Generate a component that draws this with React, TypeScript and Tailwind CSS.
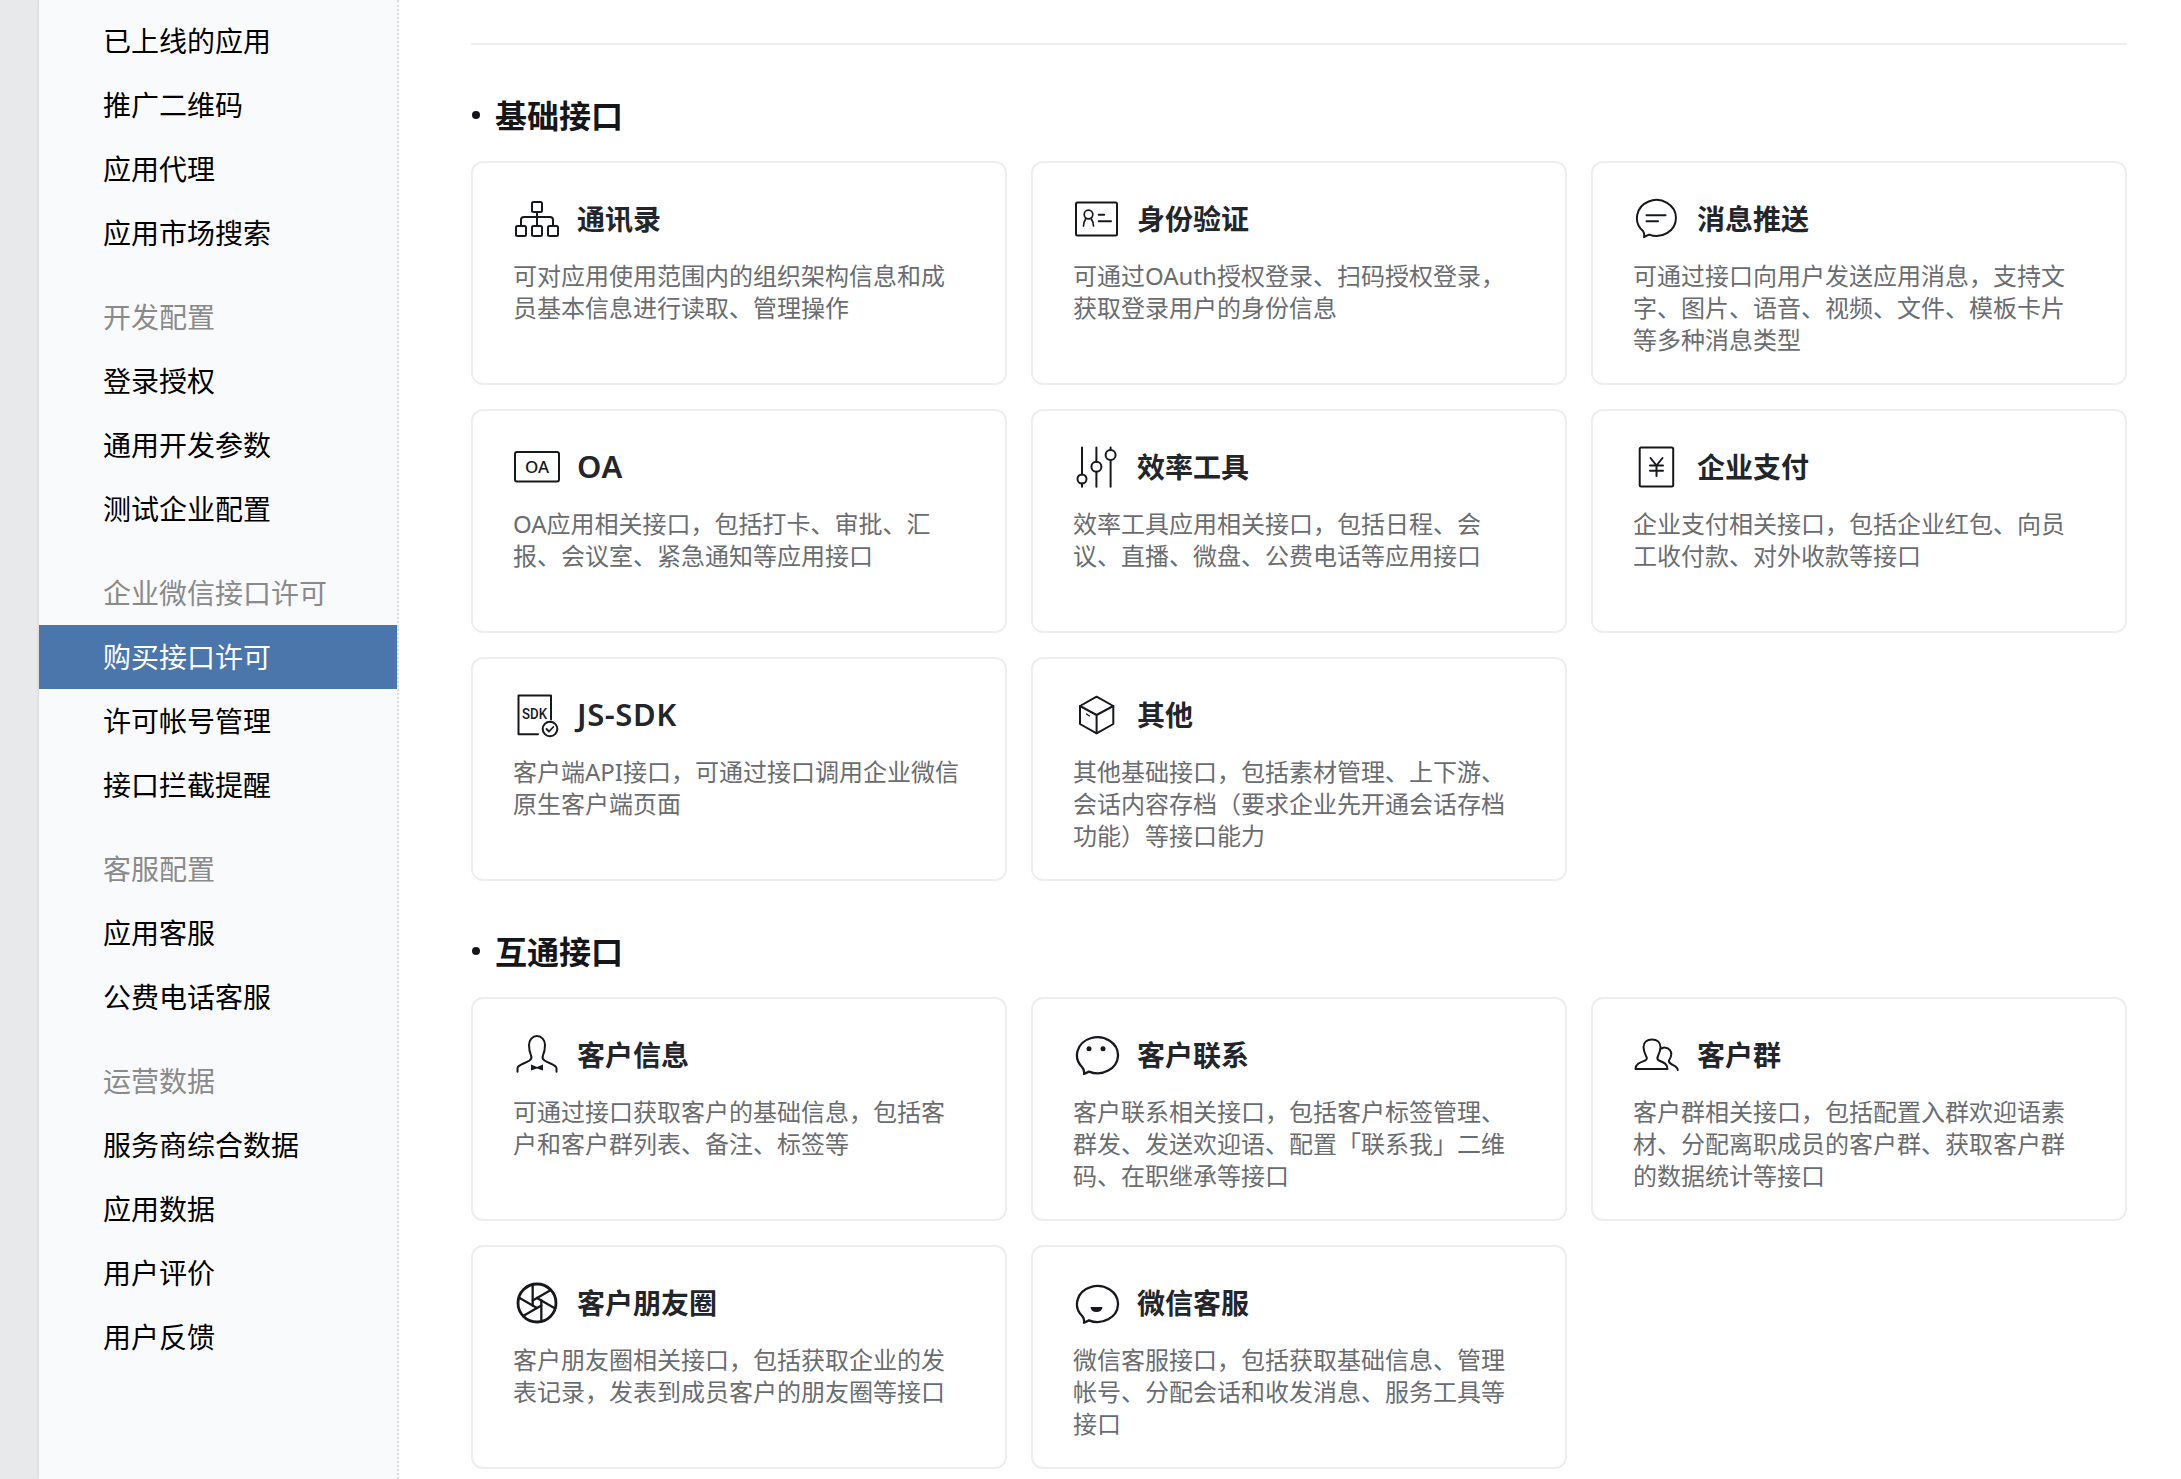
import type { ReactNode } from "react";

type MenuItem = { text: string; label?: boolean; active?: boolean };

const menu_groups: MenuItem[][] = [
  [
    { text: "已上线的应用" },
    { text: "推广二维码" },
    { text: "应用代理" },
    { text: "应用市场搜索" },
  ],
  [
    { text: "开发配置", label: true },
    { text: "登录授权" },
    { text: "通用开发参数" },
    { text: "测试企业配置" },
  ],
  [
    { text: "企业微信接口许可", label: true },
    { text: "购买接口许可", active: true },
    { text: "许可帐号管理" },
    { text: "接口拦截提醒" },
  ],
  [
    { text: "客服配置", label: true },
    { text: "应用客服" },
    { text: "公费电话客服" },
  ],
  [
    { text: "运营数据", label: true },
    { text: "服务商综合数据" },
    { text: "应用数据" },
    { text: "用户评价" },
    { text: "用户反馈" },
  ],
];

function Icon({ children }: { children: ReactNode }) {
  return (
    <svg
      viewBox="0 0 46 46"
      fill="none"
      stroke="#16181c"
      strokeWidth={2}
      strokeLinecap="round"
      strokeLinejoin="round"
      className="w-[46px] h-[46px] shrink-0 ml-[1px]"
    >
      {children}
    </svg>
  );
}

function shutter_blades() {
  const r = 5;
  const R = 19;
  const blades = [];
  for (let i = 0; i < 6; i++) {
    const a = ((60 * i + 30) * Math.PI) / 180;
    const b = ((60 * (i + 1) + 30) * Math.PI) / 180;
    const x1 = r * Math.cos(a);
    const y1 = r * Math.sin(a);
    const dx = r * Math.cos(b) - x1;
    const dy = r * Math.sin(b) - y1;
    const len = Math.hypot(dx, dy);
    const ux = dx / len;
    const uy = dy / len;
    // extend the hexagon edge until it reaches the outer ring
    const dot = x1 * ux + y1 * uy;
    const t = -dot + Math.sqrt(dot * dot - (r * r - R * R));
    blades.push(
      <line
        key={i}
        strokeWidth={2.3}
        x1={23 + x1}
        y1={22 + y1}
        x2={23 + x1 + ux * t}
        y2={22 + y1 + uy * t}
      />
    );
  }
  return blades;
}

const icons: Record<string, ReactNode> = {
  contacts: (
    <Icon>
      <rect x="18" y="5" width="10" height="10" rx="1.5" />
      <rect x="2" y="29" width="10" height="10" rx="1.5" />
      <rect x="18" y="29" width="10" height="10" rx="1.5" />
      <rect x="34" y="29" width="10" height="10" rx="1.5" />
      <path d="M23 15v14M7 29v-6a3 3 0 0 1 3-3h26a3 3 0 0 1 3 3v6" />
    </Icon>
  ),
  idcard: (
    <Icon>
      <rect x="2" y="5.5" width="41" height="33" rx="1.5" />
      <circle cx="14.5" cy="17.5" r="4.3" strokeWidth={1.7} />
      <path d="M9.5 29c0-3.5 1.3-5.800 2.300-7.500M19.500 29c0-3.500-1.300-5.800-2.300-7.500" strokeWidth={1.7} />
      <path d="M24.7 17.7h5.5M24.7 24.3h12.3" />
    </Icon>
  ),
  message: (
    <Icon>
      <path d="M9 34A19.5 18 0 1 1 15 37.6L10 40Q10.8 37 9 34Z" />
      <path d="M12.5 18.3h19M12.5 24.3h11.5" />
    </Icon>
  ),
  oa: (
    <Icon>
      <rect x="1" y="7" width="44" height="29.5" rx="2" />
      <text
        x="23"
        y="27.5"
        textAnchor="middle"
        fontSize="17"
        fontWeight="500"
        stroke="none"
        fill="#16181c"
        fontFamily="'Noto Sans', sans-serif"
      >
        OA
      </text>
    </Icon>
  ),
  tools: (
    <Icon>
      <path d="M8 2.5v27M8 38.5v3.2M22.4 2.5v14.2M22.4 26.7v15M36.6 2.5v2.5M36.6 15v26.7" />
      <circle cx="8" cy="34" r="4.5" />
      <circle cx="22.4" cy="21.7" r="5" />
      <circle cx="36.6" cy="10" r="5" />
    </Icon>
  ),
  pay: (
    <Icon>
      <rect x="5.7" y="2.5" width="33.5" height="39" rx="1.5" />
      <path d="M16.5 13l6 7.5 6-7.5M16 20.5h13M16 25.8h13M22.5 20.5V31" />
    </Icon>
  ),
  sdk: (
    <Icon>
      <path d="M24 41.3H4.5V2.5H37v24" />
      <text
        x="8"
        y="26"
        fontSize="14.5"
        fontWeight="500"
        stroke="none"
        fill="#16181c"
        textLength="25"
        lengthAdjust="spacingAndGlyphs"
        fontFamily="Roboto, sans-serif"
      >
        SDK
      </text>
      <circle cx="36" cy="36" r="7.3" />
      <path d="M32.5 36l2.5 2.5 4.3-4.5" strokeWidth={1.8} />
    </Icon>
  ),
  box: (
    <Icon>
      <path d="M22.6 3.7L39.3 13v18l-16.7 9.3L6 31V13z" />
      <path d="M6 13l16.6 9 16.7-9M22.6 22v18.3" />
      <path d="M12.5 21l3 2" strokeWidth={1.3} />
    </Icon>
  ),
  customer: (
    <Icon>
      <path d="M3.5 38.7V35.5C3.5 31.5 10.5 31 15.5 27.5 17.5 26 18 24.5 17 22.3 15.5 19 15 16 15 12 15 7 18.5 3 23 3s8 4 8 9c0 4-.5 7-2 10.3-1 2.2-.5 3.7 1.5 5.2C35.5 31 42.5 31.5 42.5 35.5v3.2" />
      <path d="M17 31.5L23 34l6-2.5v6L23 35.5l-6 2z" fill="#16181c" stroke="none" />
    </Icon>
  ),
  wechat: (
    <Icon>
      <path d="M8.2 34.2A20.5 18 0 1 1 15 38.6L10 41Q10.8 37.5 8.2 34.2Z" strokeWidth={2.3} />
      <circle cx="15" cy="15.7" r="2.5" fill="#16181c" stroke="none" />
      <circle cx="29" cy="15.7" r="2.5" fill="#16181c" stroke="none" />
    </Icon>
  ),
  group: (
    <Icon>
      <path d="M1.5 36C1.5 31 6 29.5 11 27.5 13 26.5 13.5 25 12 23 10.5 20 9.5 17 9.5 14 9.5 9.5 13 6.5 18 6.5S26.5 9.5 26.5 14C26.5 17 25.5 20 24 23 23 25 23 26.5 25 27.5 30 29.5 33.5 31 33.5 36Z" />
      <path d="M27.5 15.5C29 14.7 30.5 14.5 31.5 14.7 35 15 37.3 18 37.3 21 37.3 24 36 26 35 27.5 34.5 29 36 30.5 38 31.5 41 33 43.5 34 43.8 37" />
    </Icon>
  ),
  moments: (
    <Icon>
      <circle cx="23" cy="22" r="19" strokeWidth={2.8} />
      {shutter_blades()}
    </Icon>
  ),
  service: (
    <Icon>
      <path d="M8.2 35A20.5 18 0 1 1 15 39.4L10 41.8Q10.8 38.3 8.2 35Z" strokeWidth={2.3} />
      <path d="M16.5 26h12Q28 31 22.5 31T16.5 26Z" fill="#16181c" stroke="none" />
    </Icon>
  ),
};

const basic_cards = [
  {
    icon: "contacts",
    title: "通讯录",
    text: "可对应用使用范围内的组织架构信息和成员基本信息进行读取、管理操作",
  },
  {
    icon: "idcard",
    title: "身份验证",
    text: "可通过OAuth授权登录、扫码授权登录，获取登录用户的身份信息",
  },
  {
    icon: "message",
    title: "消息推送",
    text: "可通过接口向用户发送应用消息，支持文字、图片、语音、视频、文件、模板卡片等多种消息类型",
  },
  {
    icon: "oa",
    title: "OA",
    text: "OA应用相关接口，包括打卡、审批、汇报、会议室、紧急通知等应用接口",
  },
  {
    icon: "tools",
    title: "效率工具",
    text: "效率工具应用相关接口，包括日程、会议、直播、微盘、公费电话等应用接口",
  },
  {
    icon: "pay",
    title: "企业支付",
    text: "企业支付相关接口，包括企业红包、向员工收付款、对外收款等接口",
  },
  {
    icon: "sdk",
    title: "JS-SDK",
    text: "客户端API接口，可通过接口调用企业微信原生客户端页面",
  },
  {
    icon: "box",
    title: "其他",
    text: "其他基础接口，包括素材管理、上下游、会话内容存档（要求企业先开通会话存档功能）等接口能力",
  },
];

const connect_cards = [
  {
    icon: "customer",
    title: "客户信息",
    text: "可通过接口获取客户的基础信息，包括客户和客户群列表、备注、标签等",
  },
  {
    icon: "wechat",
    title: "客户联系",
    text: "客户联系相关接口，包括客户标签管理、群发、发送欢迎语、配置「联系我」二维码、在职继承等接口",
  },
  {
    icon: "group",
    title: "客户群",
    text: "客户群相关接口，包括配置入群欢迎语素材、分配离职成员的客户群、获取客户群的数据统计等接口",
  },
  {
    icon: "moments",
    title: "客户朋友圈",
    text: "客户朋友圈相关接口，包括获取企业的发表记录，发表到成员客户的朋友圈等接口",
  },
  {
    icon: "service",
    title: "微信客服",
    text: "微信客服接口，包括获取基础信息、管理帐号、分配会话和收发消息、服务工具等接口",
  },
];

function Sidebar() {
  return (
    <div className="w-[360px] shrink-0 bg-[#f9fafc] border-r-2 border-dotted border-[#d9dbde] pt-[9px] shadow-[-1px_0_2px_rgba(0,0,0,0.08)]">
      {menu_groups.map((group, index) => (
        <div className="mb-[20px]" key={index}>
          {group.map((item) => (
            <div
              key={item.text}
              className={`h-[64px] leading-[64px] pl-[64px] text-[28px] ${
                item.active
                  ? "bg-[#4a76ab] text-white"
                  : item.label
                    ? "text-[#8a8a8a]"
                    : "text-black"
              }`}
            >
              {item.text}
            </div>
          ))}
        </div>
      ))}
    </div>
  );
}

function Card({ icon, title, text }: { icon: string; title: string; text: string }) {
  const latin = title == "OA" || title == "JS-SDK";
  return (
    <div className="h-[224px] border-2 border-[#eeeeee] rounded-[12px] bg-white px-[40px] pt-[34px]">
      <div className="flex items-center gap-[17px] h-[46px]">
        {icons[icon]}
        <div
          className={`text-[#22252a] leading-[46px] ${
            latin ? "pb-[4px] text-[31px] font-semibold tracking-[0.6px]" : "pb-[2px] text-[28px] font-bold"
          }`}
        >
          {title}
        </div>
      </div>
      <div className="mt-[17px] text-[24px] leading-[32px] text-[#6a6d70]">{text}</div>
    </div>
  );
}

function Section({
  title,
  cards,
}: {
  title: string;
  cards: { icon: string; title: string; text: string }[];
}) {
  return (
    <div className="mb-[47px]">
      <div className="flex items-center h-[46px] mb-[23px] text-[32px] font-bold text-[#14161a]">
        <span className="w-[8px] h-[8px] rounded-full bg-[#14161a] ml-[1px] mr-[15px]" />
        <span className="pt-[2px]">{title}</span>
      </div>
      <div className="grid grid-cols-3 gap-[24px]">
        {cards.map((card) => (
          <Card key={card.title} icon={card.icon} title={card.title} text={card.text} />
        ))}
      </div>
    </div>
  );
}

export default function App() {
  return (
    <div
      className="flex h-[1479px] overflow-hidden bg-white pl-[39px] bg-gradient-to-r from-[#e8e9eb] from-[39px] to-white to-[39px]"
      style={{ fontFamily: "'Noto Sans', 'Noto Sans CJK SC', sans-serif" }}
    >
      <Sidebar />
      <div className="flex-1 min-w-0 pl-[72px] pr-[54px] pt-[43px]">
        <div className="h-[2px] bg-[#efefef] mb-[47px]" />
        <Section title="基础接口" cards={basic_cards} />
        <Section title="互通接口" cards={connect_cards} />
      </div>
    </div>
  );
}
